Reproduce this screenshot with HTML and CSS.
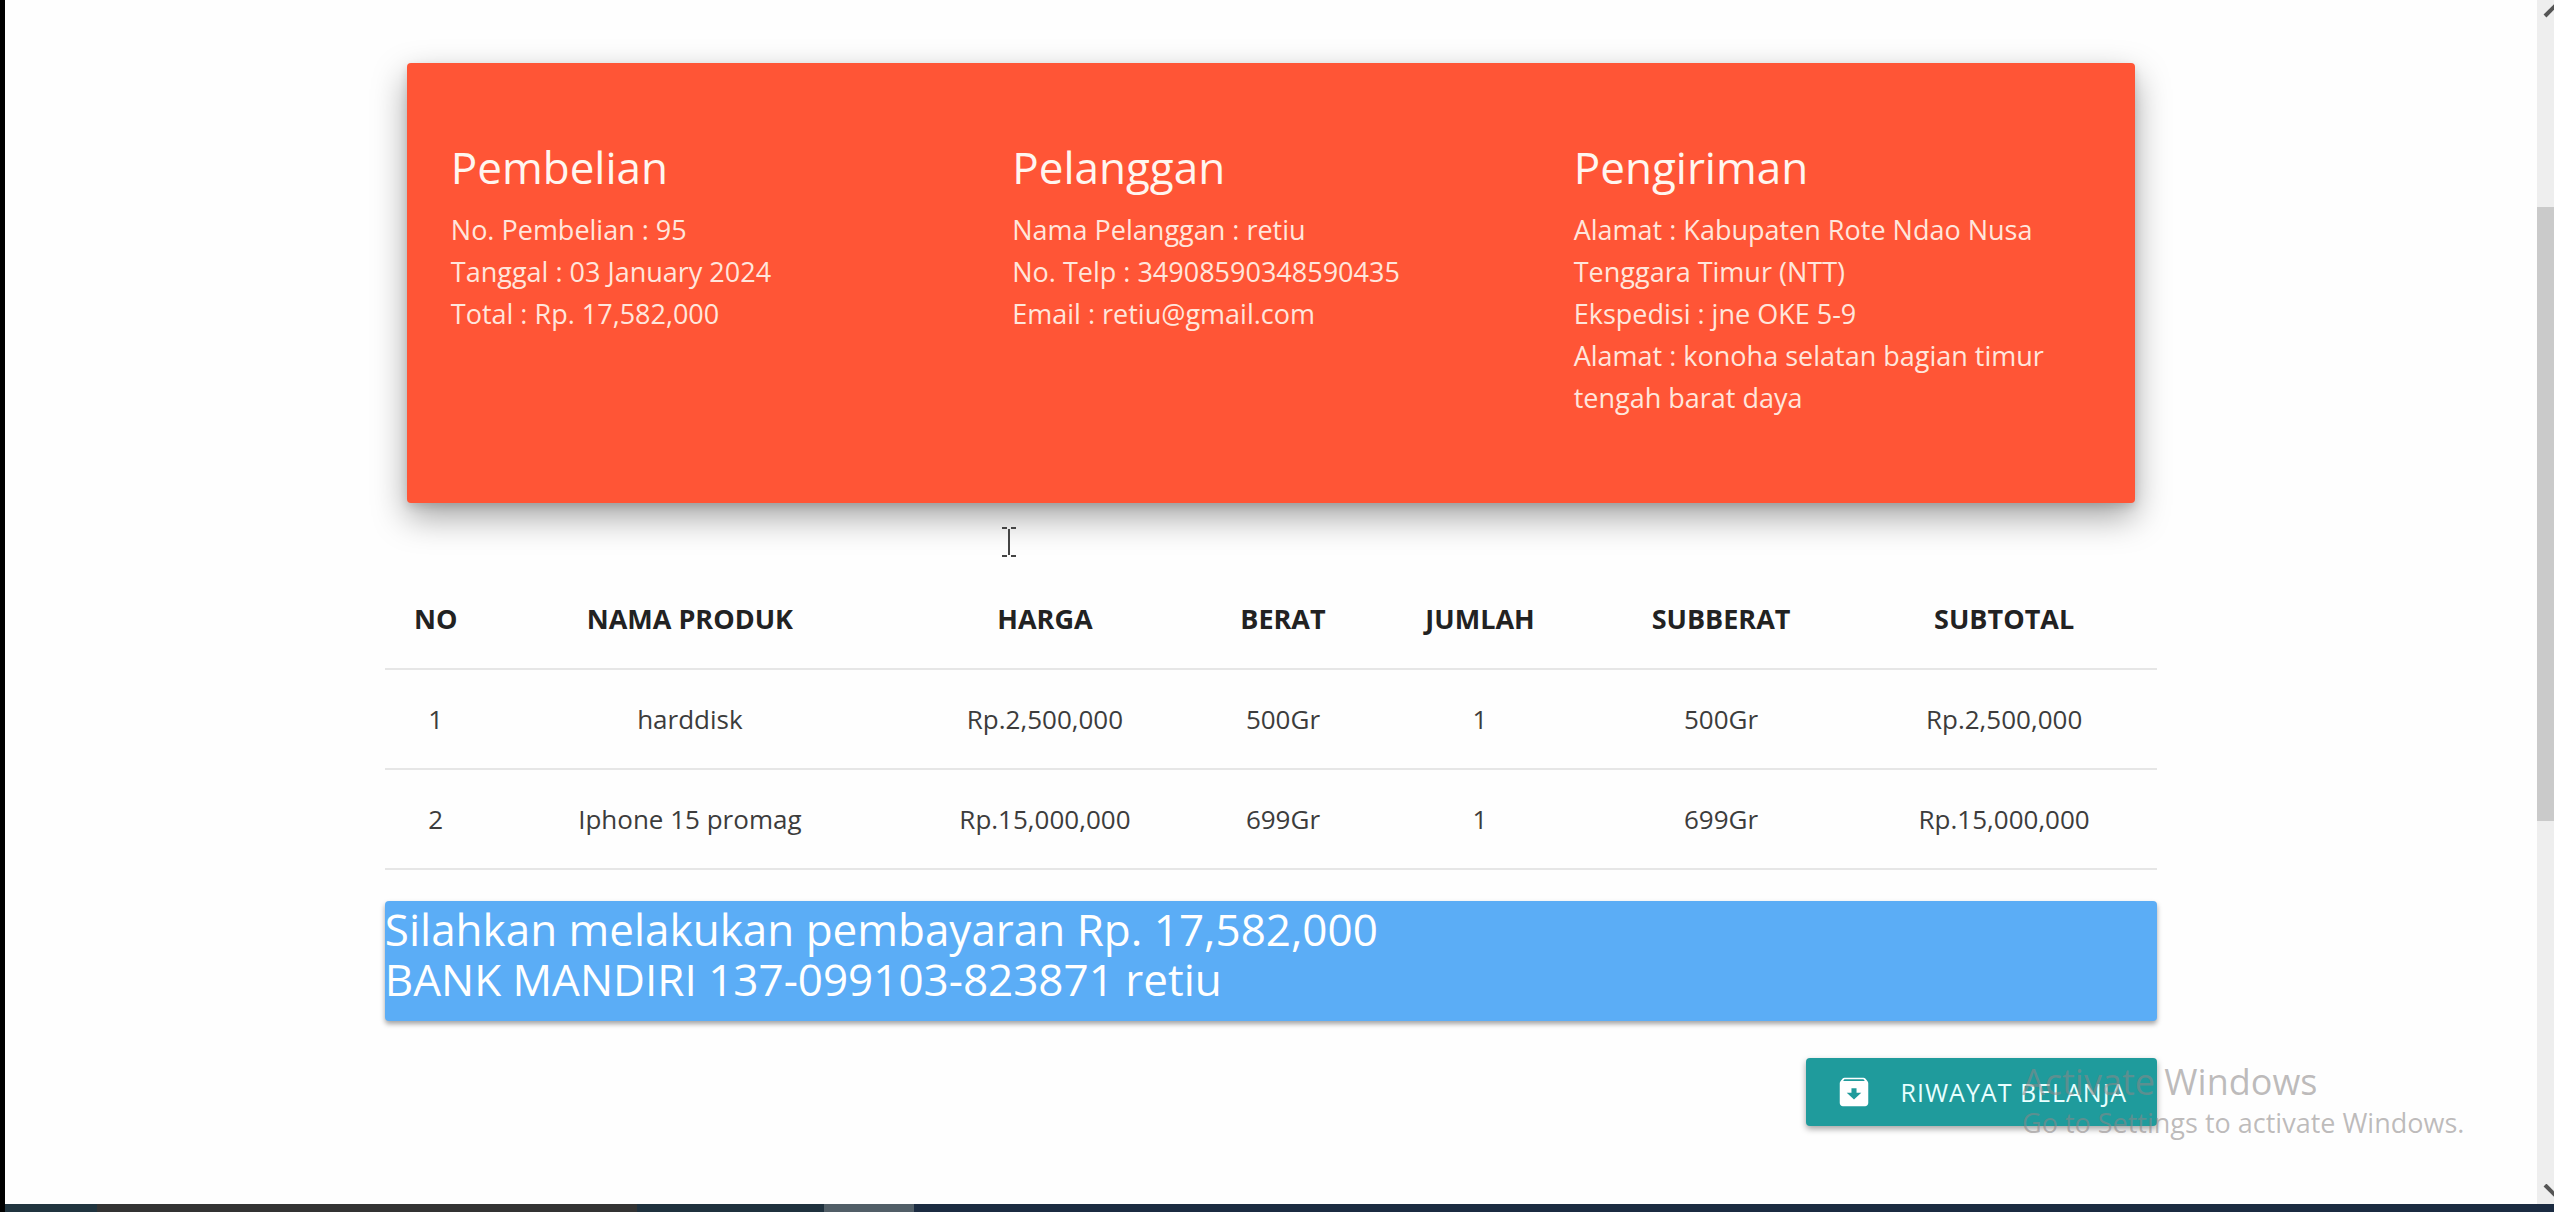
FILE: index.html
```html
<!DOCTYPE html>
<html lang="id">
<head>
<meta charset="utf-8">
<title>Nota Pembelian</title>
<link rel="stylesheet" href="styles.css">
</head>
<body>
<div class="viewport">
  <main class="page">
    <div class="container">
      <section class="summary">
        <div class="summary-col">
          <h2>Pembelian</h2>
          <p>No. Pembelian : 95<br>Tanggal : 03 January 2024<br>Total : Rp. 17,582,000</p>
        </div>
        <div class="summary-col">
          <h2>Pelanggan</h2>
          <p>Nama Pelanggan : retiu<br>No. Telp : 34908590348590435<br>Email : retiu@gmail.com</p>
        </div>
        <div class="summary-col">
          <h2>Pengiriman</h2>
          <p>Alamat : Kabupaten Rote Ndao Nusa Tenggara Timur (NTT)<br>Ekspedisi : jne OKE 5-9<br>Alamat : konoha selatan bagian timur tengah barat daya</p>
        </div>
      </section>

      <table class="items">
        <colgroup>
          <col class="col-no"><col class="col-name"><col class="col-price"><col class="col-weight"><col class="col-qty"><col class="col-subweight"><col class="col-subtotal">
        </colgroup>
        <thead>
          <tr><th>NO</th><th>NAMA PRODUK</th><th>HARGA</th><th>BERAT</th><th>JUMLAH</th><th>SUBBERAT</th><th>SUBTOTAL</th></tr>
        </thead>
        <tbody>
          <tr><td>1</td><td>harddisk</td><td>Rp.2,500,000</td><td>500Gr</td><td>1</td><td>500Gr</td><td>Rp.2,500,000</td></tr>
          <tr><td>2</td><td>Iphone 15 promag</td><td>Rp.15,000,000</td><td>699Gr</td><td>1</td><td>699Gr</td><td>Rp.15,000,000</td></tr>
        </tbody>
      </table>

      <p class="payment">Silahkan melakukan pembayaran Rp. 17,582,000<br>BANK MANDIRI 137-099103-823871 retiu</p>

      <div class="actions">
        <button class="btn" type="button">
          <svg class="btn-icon" viewBox="0 0 24 24" aria-hidden="true"><path fill-rule="evenodd" d="M20.54 5.23l-1.39-1.68C18.88 3.21 18.47 3 18 3H6c-.47 0-.88.21-1.16.55L3.46 5.23C3.17 5.57 3 6.02 3 6.5V19c0 1.1.9 2 2 2h14c1.1 0 2-.9 2-2V6.5c0-.48-.17-.93-.46-1.27zM12 16.8L7.4 12.4h3V9.6h3.2v2.8h3L12 16.8zM5.12 5l.81-1h12l.94 1H5.12z"/></svg>
          <span>RIWAYAT BELANJA</span>
        </button>
      </div>
    </div>
  </main>
  <div class="scrollbar" aria-hidden="true">
    <svg class="scroll-arrow" viewBox="0 0 17 20"><path d="M8 16L19 5"/></svg>
    <div class="track-before"></div>
    <div class="thumb"></div>
    <div class="track-after"></div>
    <svg class="scroll-arrow" viewBox="0 0 17 20"><path d="M8 1L19 12"/></svg>
  </div>
</div>
<div class="taskbar">
  <div class="task-start"></div>
  <div class="task-search"></div>
  <div class="task-icons"></div>
  <div class="task-active"></div>
</div>
<div class="watermark">
  <p class="watermark-title">Activate Windows</p>
  <p class="watermark-text">Go to Settings to activate Windows.</p>
</div>
<svg class="cursor" viewBox="0 0 14 30" aria-hidden="true"><path d="M0 1h5M9 1h5M7 2v26M0 29h5M9 29h5"/></svg>
</body>
</html>
```
FILE: styles.css
```css
* {
  box-sizing: border-box;
}

body {
  margin: 0;
  min-height: 100vh;
  display: flex;
  flex-direction: column;
  border-left: 5px solid #000;
  background: #fefefe;
  color: #3c3c3c;
  font-family: "Open Sans", "Noto Sans", sans-serif;
  font-size: 26px;
  line-height: 42px;
}

h2,
p {
  margin: 0;
}

.viewport {
  flex: 1;
  display: flex;
}

.page {
  flex: 1;
  padding-top: 63px;
}

.container {
  width: 70%;
  margin: 0 auto;
}

/* Order summary card */
.summary {
  display: grid;
  grid-template-columns: repeat(3, 1fr);
  margin: 0 22px;
  padding: 74px 22px 84px;
  border-radius: 4px;
  background: #ff5536;
  color: #ffe6dc;
  font-size: 27px;
  box-shadow: 0 14px 34px rgba(0, 0, 0, 0.36), 0 4px 8px rgba(0, 0, 0, 0.12);
}

.summary-col {
  padding: 0 22px;
}

.summary h2 {
  margin-bottom: 12px;
  color: #fff6f0;
  font-size: 44px;
  font-weight: 400;
  line-height: 60px;
}

/* Product table */
.items {
  width: 100%;
  margin-top: 66px;
  border-collapse: collapse;
  table-layout: fixed;
  text-align: center;
}

.items th,
.items td {
  height: 100px;
  padding: 0;
  border-bottom: 2px solid #e6e6e6;
}

.items th {
  color: #222;
  font-size: 27px;
  font-weight: 700;
}

.col-no { width: 102px; }
.col-name { width: 406px; }
.col-price { width: 304px; }
.col-weight { width: 172px; }
.col-qty { width: 222px; }
.col-subweight { width: 260px; }
.col-subtotal { width: 306px; }

/* Payment notice */
.payment {
  margin-top: 31px;
  padding: 3px 0 17px;
  border-radius: 4px;
  background: #5badf6;
  color: #fff;
  font-size: 44px;
  line-height: 50px;
  box-shadow: 0 3px 5px rgba(0, 0, 0, 0.36);
}

.actions {
  display: flex;
  justify-content: flex-end;
  margin: 37px 0 40px;
}

.btn {
  display: flex;
  align-items: center;
  gap: 28px;
  height: 68px;
  padding: 0 30px 0 29px;
  border: 0;
  border-radius: 4px;
  background: #1f9b9c;
  color: #e8ffff;
  font: inherit;
  font-size: 25px;
  letter-spacing: 1px;
  box-shadow: 0 3px 6px rgba(0, 0, 0, 0.36);
}

.btn-icon {
  width: 38px;
  height: 38px;
  fill: #fff;
}

/* Scrollbar at the right edge */
.scrollbar {
  width: 17px;
  display: flex;
  flex-direction: column;
  background: #eee;
}

.scroll-arrow {
  height: 20px;
  fill: none;
  stroke: #555;
  stroke-width: 4;
}

.track-before { flex: 187; }
.thumb { flex: 614; background: #cacaca; }
.track-after { flex: 363; }

/* Taskbar edge at the bottom */
.taskbar {
  display: flex;
  height: 8px;
  background: #1b2b41;
}

.task-start { width: 92px; background: #20343f; }
.task-search { width: 540px; background: #333; }
.task-icons { width: 187px; background: #1f313e; }
.task-active { width: 90px; background: #515e67; }

/* System overlay text and pointer */
.watermark {
  position: absolute;
  right: 90px;
  bottom: 70px;
  width: 442px;
  color: rgba(140, 135, 135, 0.56);
  white-space: nowrap;
}

.watermark-title {
  font-size: 36px;
  line-height: 44px;
}

.watermark-text {
  font-size: 27px;
  line-height: 38px;
}

.cursor {
  position: absolute;
  left: 1002px;
  top: 527px;
  width: 14px;
  height: 30px;
  fill: none;
  stroke: #444;
  stroke-width: 2;
}
```
